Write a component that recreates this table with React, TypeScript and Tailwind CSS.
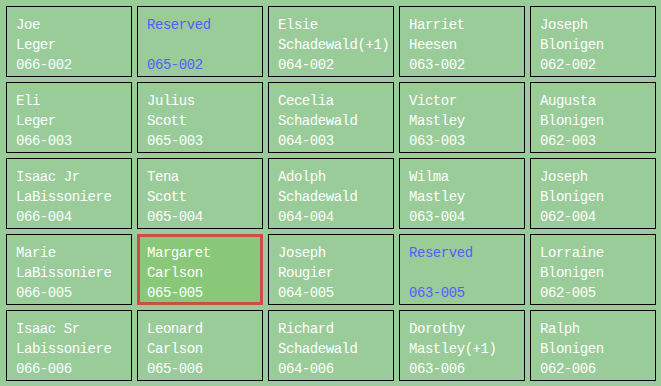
type Seat = { first: string; last: string; code: string; reserved?: boolean; selected?: boolean };

const rows: Seat[][] = [
  [
    { first: "Joe", last: "Leger", code: "066-002" },
    { first: "Reserved", last: "", code: "065-002", reserved: true },
    { first: "Elsie", last: "Schadewald(+1)", code: "064-002" },
    { first: "Harriet", last: "Heesen", code: "063-002" },
    { first: "Joseph", last: "Blonigen", code: "062-002" },
  ],
  [
    { first: "Eli", last: "Leger", code: "066-003" },
    { first: "Julius", last: "Scott", code: "065-003" },
    { first: "Cecelia", last: "Schadewald", code: "064-003" },
    { first: "Victor", last: "Mastley", code: "063-003" },
    { first: "Augusta", last: "Blonigen", code: "062-003" },
  ],
  [
    { first: "Isaac Jr", last: "LaBissoniere", code: "066-004" },
    { first: "Tena", last: "Scott", code: "065-004" },
    { first: "Adolph", last: "Schadewald", code: "064-004" },
    { first: "Wilma", last: "Mastley", code: "063-004" },
    { first: "Joseph", last: "Blonigen", code: "062-004" },
  ],
  [
    { first: "Marie", last: "LaBissoniere", code: "066-005" },
    { first: "Margaret", last: "Carlson", code: "065-005", selected: true },
    { first: "Joseph", last: "Rougier", code: "064-005" },
    { first: "Reserved", last: "", code: "063-005", reserved: true },
    { first: "Lorraine", last: "Blonigen", code: "062-005" },
  ],
  [
    { first: "Isaac Sr", last: "Labissoniere", code: "066-006" },
    { first: "Leonard", last: "Carlson", code: "065-006" },
    { first: "Richard", last: "Schadewald", code: "064-006" },
    { first: "Dorothy", last: "Mastley(+1)", code: "063-006" },
    { first: "Ralph", last: "Blonigen", code: "062-006" },
  ],
];

function Cell({ seat }: { seat: Seat }) {
  const box = seat.selected
    ? "border-[3px] border-[#cc4b4b] bg-[#88c878] pl-[7px] pt-[6px]"
    : "border border-black bg-[#99cc99] pl-[9px] pt-[8px]";
  const color = seat.reserved ? "text-[#5a5aff]" : "text-white";
  return (
    <div className={`h-[71px] w-[126px] ${box} ${color} flex flex-col text-[14px] leading-[20px] tracking-[-0.45px] whitespace-nowrap`}>
      <span className="h-[20px]">{seat.first}</span>
      <span className="h-[20px]">{seat.last}</span>
      <span className="h-[20px]">{seat.code}</span>
    </div>
  );
}

export default function App() {
  return (
    <div className="min-h-screen w-[661px] h-[386px] bg-[#99cc99] pl-[6px] pt-[6px] font-['Liberation_Mono',monospace]">
      <div className="grid grid-cols-[repeat(5,126px)] grid-rows-[repeat(5,71px)] gap-[5px]">
        {rows.flat().map((seat, i) => (
          <Cell key={i} seat={seat} />
        ))}
      </div>
    </div>
  );
}
